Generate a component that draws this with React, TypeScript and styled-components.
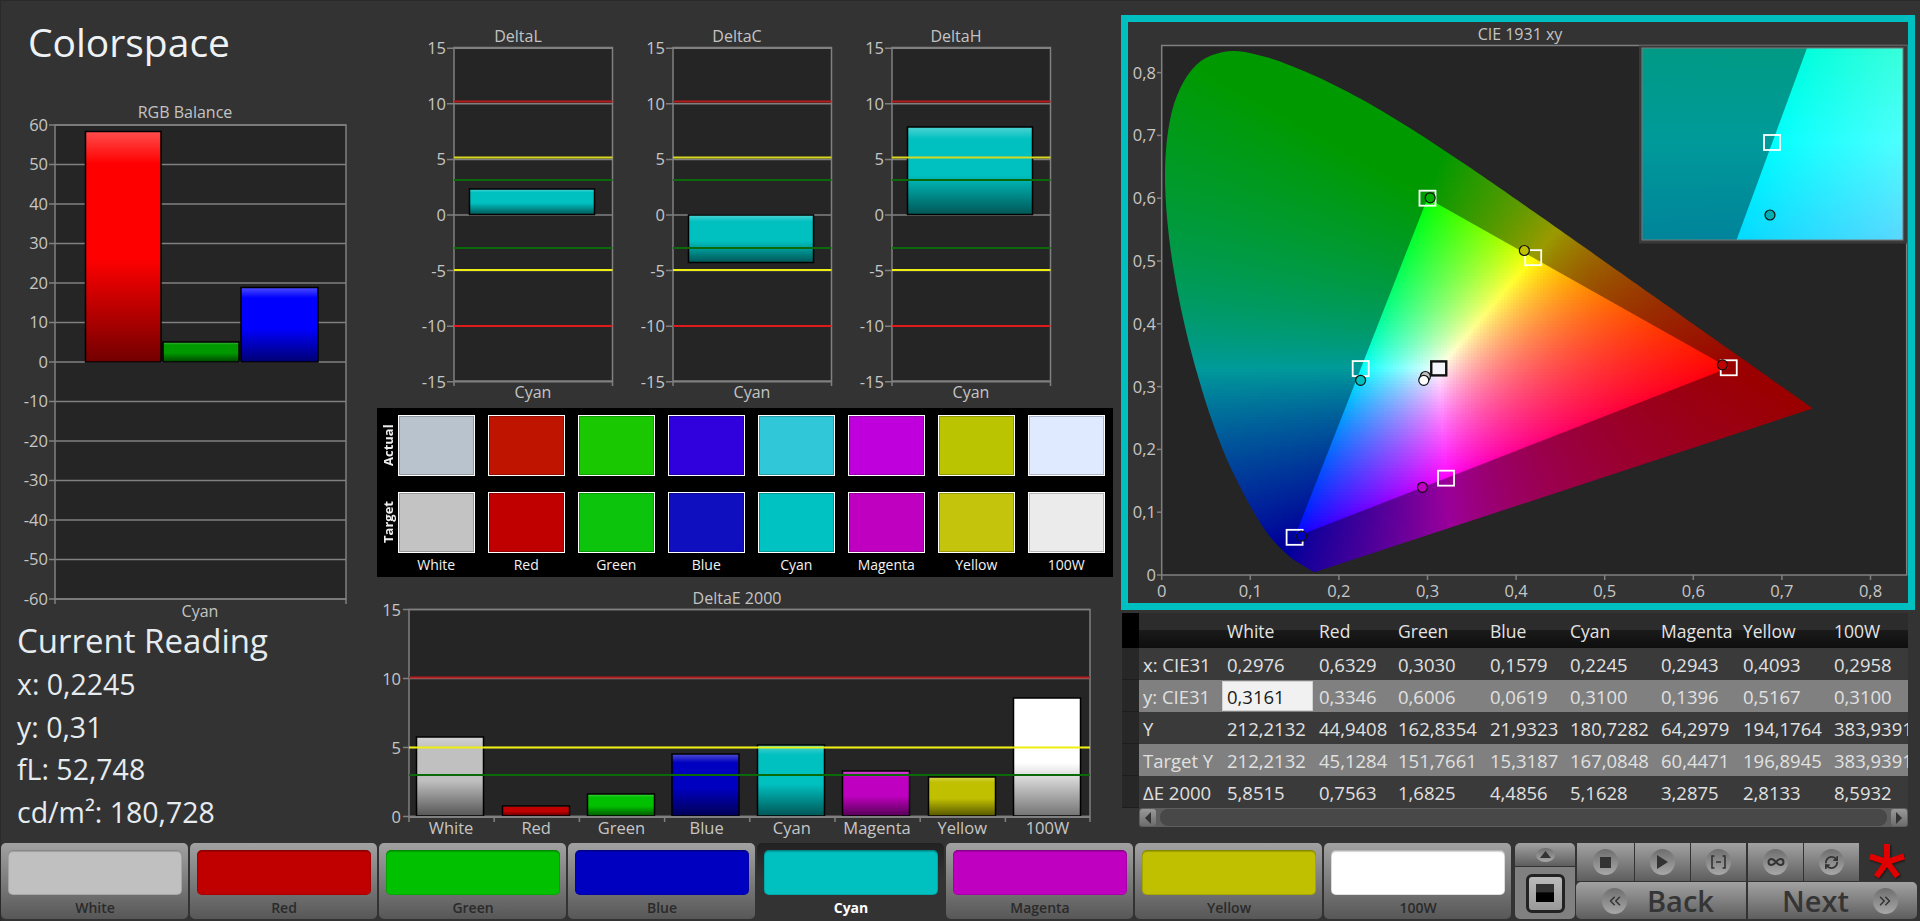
import React, { useMemo } from 'react';
import styled, { createGlobalStyle } from 'styled-components';
import { Infinity as InfinityIcon, RefreshCw, ChevronsLeft, ChevronsRight } from 'lucide-react';

const FONT = '"Open Sans", "Noto Sans", "DejaVu Sans", sans-serif';

const GlobalStyle = createGlobalStyle`
    html, body { margin: 0; padding: 0; background: #333; }
    * { box-sizing: border-box; }
`;

/* ---- colour helpers ---- */

const mix = (hex: string, target: number, t: number) => {
    const n = parseInt(hex.slice(1), 16);
    const c = [n >> 16, (n >> 8) & 255, n & 255].map(v => Math.round(v + (target - v) * t));
    return `rgb(${c.join(',')})`;
};

// xy to a normalised rec709 colour, dimmed for the part outside the gamut
const chroma = (x: number, y: number, bright: boolean) => {
    const X = x / y;
    const Z = (1 - x - y) / y;
    const lin = [
        3.2406 * X - 1.5372 - 0.4986 * Z,
        -0.9689 * X + 1.8758 + 0.0415 * Z,
        0.0557 * X - 0.204 + 1.057 * Z,
    ];
    const clipped = lin.map(v => Math.max(v, 0));
    const max = Math.max(...clipped) || 1;
    const k = bright ? 255 : 154;
    const c = clipped.map(v => Math.round(k * Math.pow(v / max, 1 / 1.2)));
    return `rgb(${c.join(',')})`;
};

/* ---- chart text ---- */

const Label = styled.text`
    font-family: ${FONT};
    font-size: 16.5px;
    fill: #c6c6c6;
`;

const Title = styled(Label)`
    font-size: 16px;
    fill: #c4c4c4;
`;

const Block = styled.svg`
    display: block;
    flex: none;
`;

type BarProps = { id: string; x: number; y: number; w: number; h: number; color: string };

const Bar: React.FC<BarProps> = ({ id, x, y, w, h, color }) => (
    <g>
        <defs>
            <linearGradient id={id} x1="0" y1="0" x2="0" y2="1">
                <stop offset="0" stopColor={mix(color, 255, 0.3)} />
                <stop offset="0.14" stopColor={color} />
                <stop offset="0.55" stopColor={color} />
                <stop offset="1" stopColor={mix(color, 0, 0.55)} />
            </linearGradient>
        </defs>
        <rect x={x} y={y} width={w} height={h} fill={`url(#${id})`} stroke="#000" strokeWidth="1.5" />
    </g>
);

const AXIS = '#808080';

/* ---- RGB balance ---- */

const rgbY = (v: number) => 362 - v * 3.95;

const RgbChart = () => (
    <Block width="376" height="522" viewBox="0 100 376 522">
        <Title x="185" y="118" textAnchor="middle">RGB Balance</Title>
        <rect x="55" y="125" width="291" height="474" fill="#252525" />
        {Array.from({ length: 13 }, (_, i) => 60 - i * 10).map(v => (
            <g key={v}>
                <line x1="49" x2="346" y1={rgbY(v)} y2={rgbY(v)} stroke={AXIS} strokeWidth="1.5" />
                <Label x="48" y={rgbY(v) + 5.5} textAnchor="end">{v}</Label>
            </g>
        ))}
        <rect x="55" y="125" width="291" height="474" fill="none" stroke={AXIS} strokeWidth="1.5" />
        <line x1="55" x2="55" y1="599" y2="604" stroke={AXIS} strokeWidth="1.5" />
        <line x1="346" x2="346" y1="599" y2="604" stroke={AXIS} strokeWidth="1.5" />
        <Bar id="rgb-r" x={85.5} y={131.5} w={75.5} h={230.5} color="#ff0000" />
        <Bar id="rgb-g" x={163} y={342} w={76} h={20} color="#009a00" />
        <Bar id="rgb-b" x={241} y={287.5} w={77} h={74.5} color="#0000ff" />
        <Title x="200" y="617" textAnchor="middle">Cyan</Title>
    </Block>
);

/* ---- delta L / C / H ---- */

const dY = (v: number) => 215 - v * 11.12;

const LIMITS = [
    { y: 101.5, color: '#b81c1c' },
    { y: 157.5, color: '#d8d820' },
    { y: 180, color: '#0a6a0a' },
    { y: 248, color: '#0a6a0a' },
    { y: 270, color: '#eeee10' },
    { y: 326, color: '#e01a1a' },
];

const DeltaChart: React.FC<{ name: string; top: number; bottom: number }> = ({ name, top, bottom }) => (
    <Block width="219" height="408" viewBox="0 0 219 408">
        <Title x="114" y="42" textAnchor="middle">{name}</Title>
        <rect x="50" y="47.5" width="158.5" height="333.5" fill="#252525" />
        {[15, 10, 5, 0, -5, -10, -15].map(v => (
            <g key={v}>
                <line x1="43" x2="208.5" y1={dY(v)} y2={dY(v)} stroke={AXIS} strokeWidth="1.5" />
                <Label x="42" y={dY(v) + 6} textAnchor="end">{v}</Label>
            </g>
        ))}
        <rect x="50" y="47.5" width="158.5" height="333.5" fill="none" stroke={AXIS} strokeWidth="1.5" />
        <line x1="50" x2="50" y1="381" y2="386" stroke={AXIS} strokeWidth="1.5" />
        <line x1="208.5" x2="208.5" y1="381" y2="386" stroke={AXIS} strokeWidth="1.5" />
        <Bar id={`delta-${name}`} x={65.5} y={top} w={125} h={bottom - top} color="#00c0c0" />
        {LIMITS.map(l => (
            <line key={l.y} x1="50" x2="208.5" y1={l.y} y2={l.y} stroke={l.color} strokeWidth="2" />
        ))}
        <Title x="129" y="398" textAnchor="middle">Cyan</Title>
    </Block>
);

const DeltaRow = styled.div`
    display: flex;
    padding-left: 28px;
    height: 408px;
`;

/* ---- swatches ---- */

const NAMES = ['White', 'Red', 'Green', 'Blue', 'Cyan', 'Magenta', 'Yellow', '100W'];
const ACTUAL = ['#b9c3cd', '#bf1400', '#19c800', '#3000dd', '#30c8d8', '#c000dc', '#bac400', '#dfe9ff'];
const TARGET = ['#c3c3c3', '#c00000', '#0cc40c', '#0f0fc0', '#00c2c2', '#c000c0', '#c4c40c', '#ebebeb'];

const SwatchPanel = styled.div`
    display: grid;
    grid-template-columns: 21px repeat(8, 90px);
    grid-template-rows: 61px 61px 1fr;
    row-gap: 16px;
    width: 736px;
    height: 169px;
    margin-left: 1px;
    padding-top: 7px;
    background: #000;
`;

const RowName = styled.div`
    writing-mode: vertical-rl;
    transform: rotate(180deg);
    display: flex;
    align-items: center;
    justify-content: center;
    font: 700 13px ${FONT};
    color: #eee;
`;

const Swatch = styled.div<{ $color: string }>`
    margin-right: 13.5px;
    background: ${p => p.$color};
    border: 1.5px solid #fff;
    box-shadow: inset 0 0 0 1px rgba(0, 0, 0, 0.22);
`;

const SwatchName = styled.div`
    margin: -14px 13.5px 0 0;
    text-align: center;
    font: 500 14px ${FONT};
    color: #f2f2f2;
    white-space: nowrap;
`;

const ColorChecker = () => (
    <SwatchPanel>
        <RowName>Actual</RowName>
        {ACTUAL.map(c => <Swatch key={c} $color={c} />)}
        <RowName>Target</RowName>
        {TARGET.map(c => <Swatch key={c} $color={c} />)}
        <span />
        {NAMES.map(n => <SwatchName key={n}>{n}</SwatchName>)}
    </SwatchPanel>
);

/* ---- delta E ---- */

const E_BARS = [
    { x: 416.5, top: 737, color: '#c0c0c0' },
    { x: 502.5, top: 806, color: '#c00000' },
    { x: 587.5, top: 794, color: '#00c000' },
    { x: 672, top: 754, color: '#0000c0' },
    { x: 757.5, top: 745, color: '#00c0c0' },
    { x: 842.5, top: 771, color: '#c000c0' },
    { x: 928.5, top: 777, color: '#c0c000' },
    { x: 1013.5, top: 698, color: '#ffffff' },
];

const eY = (v: number) => 816.5 - v * 13.8;

const DeltaEChart = () => (
    <Block width="744" height="266" viewBox="376 577 744 266">
        <Title x="737" y="604" textAnchor="middle">DeltaE 2000</Title>
        <rect x="409" y="609.5" width="681" height="207" fill="#252525" />
        {[15, 10, 5, 0].map(v => (
            <g key={v}>
                <line x1="403" x2="1090" y1={eY(v)} y2={eY(v)} stroke={AXIS} strokeWidth="1.5" />
                <Label x="401" y={eY(v) + 6} textAnchor="end">{v}</Label>
            </g>
        ))}
        <rect x="409" y="609.5" width="681" height="207" fill="none" stroke={AXIS} strokeWidth="1.5" />
        {E_BARS.map(b => (
            <Bar key={b.x} id={`e-${b.x}`} x={b.x} y={b.top} w={67} h={816 - b.top} color={b.color} />
        ))}
        <line x1="409" x2="1090" y1="817" y2="817" stroke={AXIS} strokeWidth="2" />
        <line x1="409" x2="1090" y1="677.5" y2="677.5" stroke="#b81c1c" strokeWidth="2" />
        <line x1="409" x2="1090" y1="747.5" y2="747.5" stroke="#eeee10" strokeWidth="2" />
        <line x1="409" x2="1090" y1="775" y2="775" stroke="#0a6a0a" strokeWidth="2" />
        {NAMES.map((n, i) => (
            <g key={n}>
                <line x1={409 + i * 85.2} x2={409 + i * 85.2} y1="817" y2="822" stroke={AXIS} strokeWidth="1.5" />
                <Label x={451 + i * 85.2} y="834" textAnchor="middle" fontSize="16.5">{n}</Label>
            </g>
        ))}
        <line x1="1090" x2="1090" y1="817" y2="822" stroke={AXIS} strokeWidth="1.5" />
    </Block>
);

/* ---- CIE diagram ---- */

const LOCUS: [number, number][] = [
    [0.1741, 0.005], [0.1714, 0.0051], [0.1644, 0.0109], [0.1566, 0.0177], [0.144, 0.0297],
    [0.1241, 0.0578], [0.1096, 0.0868], [0.0913, 0.1327], [0.0687, 0.2007], [0.0454, 0.295],
    [0.0235, 0.4127], [0.0082, 0.5384], [0.0039, 0.6548], [0.0139, 0.7502], [0.0389, 0.812],
    [0.0743, 0.8338], [0.1142, 0.8262], [0.1547, 0.8059], [0.1929, 0.7816], [0.2296, 0.7543],
    [0.2658, 0.7243], [0.3016, 0.6923], [0.3373, 0.6589], [0.3731, 0.6245], [0.4087, 0.5896],
    [0.4441, 0.5547], [0.4788, 0.5202], [0.5125, 0.4866], [0.5448, 0.4544], [0.5752, 0.4242],
    [0.6029, 0.3965], [0.627, 0.3725], [0.6658, 0.334], [0.6915, 0.3083], [0.7079, 0.292],
    [0.726, 0.274], [0.7347, 0.2653],
];

const cx = (v: number) => 1161.7 + v * 886;
const cy = (v: number) => 575 - v * 628;

// catmull-rom through the spectral samples so the curve stays round
const densify = (pts: [number, number][]) => {
    const out: [number, number][] = [];
    for (let i = 0; i < pts.length - 1; i++) {
        const p0 = pts[Math.max(i - 1, 0)];
        const p1 = pts[i];
        const p2 = pts[i + 1];
        const p3 = pts[Math.min(i + 2, pts.length - 1)];
        for (let s = 0; s < 6; s++) {
            const t = s / 6;
            const at = (k: 0 | 1) =>
                0.5 * (2 * p1[k] + (p2[k] - p0[k]) * t +
                    (2 * p0[k] - 5 * p1[k] + 4 * p2[k] - p3[k]) * t * t +
                    (3 * p1[k] - p0[k] - 3 * p2[k] + p3[k]) * t * t * t);
            out.push([at(0), at(1)]);
        }
    }
    out.push(pts[pts.length - 1]);
    return out;
};

const LOCUS_PX = densify(LOCUS.map(([x, y]) => [cx(x), cy(y)] as [number, number]));
const LOCUS_POINTS = LOCUS_PX.map(p => p.join(',')).join(' ');
const GAMUT_POINTS = [[0.64, 0.33], [0.3, 0.6], [0.15, 0.06]].map(([x, y]) => `${cx(x)},${cy(y)}`).join(' ');

const inside = (px: number, py: number) => {
    let hit = false;
    for (let i = 0, j = LOCUS_PX.length - 1; i < LOCUS_PX.length; j = i++) {
        const [xi, yi] = LOCUS_PX[i];
        const [xj, yj] = LOCUS_PX[j];
        if (yi > py !== yj > py && px < ((xj - xi) * (py - yi)) / (yj - yi) + xi) hit = !hit;
    }
    return hit;
};

type Cell = { x: number; y: number; fill: string };

const CELL = 3;
const CORNERS = [[0, 0], [CELL, 0], [0, CELL], [CELL, CELL]];

const outerCells = () => {
    const cells: Cell[] = [];
    for (let py = 45; py < 576; py += CELL) {
        for (let px = 1162; px < 1816; px += CELL) {
            if (!CORNERS.some(([a, b]) => inside(px + a, py + b))) continue;
            const x = (px + 1.5 - 1161.7) / 886;
            const y = Math.max((575 - py - 1.5) / 628, 0.004);
            cells.push({ x: px, y: py, fill: chroma(x, y, false) });
        }
    }
    return cells;
};

const gamutCells = () => {
    const cells: Cell[] = [];
    for (let py = 195; py < 540; py += CELL) {
        for (let px = 1291; px < 1731; px += CELL) {
            const x = (px + 1.5 - 1161.7) / 886;
            const y = (575 - py - 1.5) / 628;
            cells.push({ x: px, y: py, fill: chroma(x, y, true) });
        }
    }
    return cells;
};

const zoomCells = (bright: boolean) => {
    const cells: Cell[] = [];
    for (let py = 48; py < 240; py += CELL) {
        for (let px = 1642; px < 1903; px += CELL) {
            const x = 0.2246 + (px + 1.5 - 1772) / 5150;
            const y = 0.3287 - (py + 1.5 - 142) / 3900;
            cells.push({ x: px, y: py, fill: chroma(x, y, bright) });
        }
    }
    return cells;
};

const TARGETS: [number, number][] = [
    [0.64, 0.33], [0.3, 0.6], [0.15, 0.06], [0.4193, 0.5053], [0.2246, 0.3287], [0.3209, 0.1542],
];

const READINGS = [
    { x: 0.2976, y: 0.3161, fill: '#c0c0c0' },
    { x: 0.6329, y: 0.3346, fill: '#c00000' },
    { x: 0.303, y: 0.6006, fill: '#00b000' },
    { x: 0.1579, y: 0.0619, fill: '#0000c0' },
    { x: 0.2245, y: 0.31, fill: '#00c0c0' },
    { x: 0.2943, y: 0.1396, fill: '#c000c0' },
    { x: 0.4093, y: 0.5167, fill: '#c0c000' },
    { x: 0.2958, y: 0.31, fill: '#ffffff' },
];

const Cells: React.FC<{ cells: Cell[] }> = ({ cells }) => (
    <g shapeRendering="crispEdges">
        {cells.map(c => (
            <rect key={`${c.x}-${c.y}`} x={c.x} y={c.y} width={CELL} height={CELL} fill={c.fill} />
        ))}
    </g>
);

const Frame = styled.div`
    width: 794px;
    height: 595px;
    margin: 15px 0 0 1px;
    border: 7px solid #00bfc0;
    background: #333;
`;

const CieDiagram = () => {
    const outer = useMemo(outerCells, []);
    const gamut = useMemo(gamutCells, []);
    const zoomDim = useMemo(() => zoomCells(false), []);
    const zoomBright = useMemo(() => zoomCells(true), []);
    return (
        <Frame>
            <Block width="780" height="581" viewBox="1128 22 780 581">
                <defs>
                    <clipPath id="locus"><polygon points={LOCUS_POINTS} /></clipPath>
                    <clipPath id="gamut"><polygon points={GAMUT_POINTS} /></clipPath>
                    <clipPath id="zoomGamut"><polygon points="1807,48 1903,48 1903,240 1736.5,240" /></clipPath>
                </defs>
                <Title x="1520" y="40" textAnchor="middle">CIE 1931 xy</Title>
                <rect x="1161.7" y="45.5" width="745" height="529.5" fill="#252525" stroke={AXIS} strokeWidth="1.5" />
                <g clipPath="url(#locus)"><Cells cells={outer} /></g>
                <g clipPath="url(#gamut)"><Cells cells={gamut} /></g>
                {[0, 1, 2, 3, 4, 5, 6, 7, 8].map(i => (
                    <g key={i}>
                        <line x1="1157" x2="1161.7" y1={cy(i / 10)} y2={cy(i / 10)} stroke={AXIS} strokeWidth="1.5" />
                        <Label x="1156" y={cy(i / 10) + 6} textAnchor="end" fontSize="14.5">{i ? `0,${i}` : '0'}</Label>
                        <line x1={cx(i / 10)} x2={cx(i / 10)} y1="575" y2="580" stroke={AXIS} strokeWidth="1.5" />
                        <Label x={cx(i / 10)} y="597" textAnchor="middle" fontSize="14.5">{i ? `0,${i}` : '0'}</Label>
                    </g>
                ))}
                {TARGETS.map(([x, y]) => (
                    <rect key={x} x={cx(x) - 8} y={cy(y) - 7.5} width="16" height="15" fill="none" stroke="#fff" strokeWidth="1.8" />
                ))}
                <rect x={cx(0.3127) - 7.5} y={cy(0.329) - 7} width="15" height="14" fill="#f4f4fb" stroke="#111" strokeWidth="2.4" />
                {READINGS.map(r => (
                    <ellipse key={r.x} cx={cx(r.x)} cy={cy(r.y)} rx="5" ry="5" fill={r.fill} stroke="#111" strokeWidth="1.2" />
                ))}
                <rect x="1639" y="45.5" width="268" height="198" fill="#3a3a3a" />
                <Cells cells={zoomDim} />
                <g clipPath="url(#zoomGamut)"><Cells cells={zoomBright} /></g>
                <rect x="1642" y="48" width="261" height="192" fill="none" stroke="#7a7a7a" strokeWidth="1" />
                <rect x="1764" y="135" width="16" height="15" fill="none" stroke="#fff" strokeWidth="1.8" />
                <circle cx="1770" cy="215" r="5" fill="#00b0b0" stroke="#111" strokeWidth="1.2" />
            </Block>
        </Frame>
    );
};

/* ---- table ---- */

const TABLE_ROWS = [
    ['x: CIE31', '0,2976', '0,6329', '0,3030', '0,1579', '0,2245', '0,2943', '0,4093', '0,2958'],
    ['y: CIE31', '0,3161', '0,3346', '0,6006', '0,0619', '0,3100', '0,1396', '0,5167', '0,3100'],
    ['Y', '212,2132', '44,9408', '162,8354', '21,9323', '180,7282', '64,2979', '194,1764', '383,9391'],
    ['Target Y', '212,2132', '45,1284', '151,7661', '15,3187', '167,0848', '60,4471', '196,8945', '383,9391'],
    ['ΔE 2000', '5,8515', '0,7563', '1,6825', '4,4856', '5,1628', '3,2875', '2,8133', '8,5932'],
];

const COLUMNS = '17px 84px 92px 79px 92px 80px 91px 82px 91px 78px';

const Table = styled.div`
    width: 786px;
    margin: 3px 0 0 2px;
    overflow: hidden;
    font-family: ${FONT};
`;

const HeadRow = styled.div`
    display: grid;
    grid-template-columns: ${COLUMNS};
    height: 35px;
    align-items: center;
    font-size: 17.5px;
    color: #e4e4e4;
    background: linear-gradient(#2c2c2c 0 48%, #1a1a1a 50%, #0e0e0e 100%);
    & > :first-child {
        align-self: stretch;
        background: #000;
    }
`;

const BodyRow = styled.div<{ $alt: boolean }>`
    display: grid;
    grid-template-columns: ${COLUMNS};
    height: 32px;
    align-items: center;
    font-size: 18.5px;
    white-space: nowrap;
    color: #e0e0e0;
    background: ${p => (p.$alt ? '#808080' : '#3a3a3a')};
`;

const Gutter = styled.div`
    align-self: stretch;
    background: #272727;
    border-bottom: 1px solid #1d1d1d;
`;

const TableCell = styled.div`
    padding-left: 4px;
`;

const SelectedCell = styled(TableCell)`
    align-self: stretch;
    margin: 1px 2px 1px -1px;
    padding-top: 2px;
    background: #f1f1f1;
    border: 1px solid #d2d2d2;
    color: #1a1a1a;
`;

const Scrollbar = styled.div`
    display: flex;
    align-items: center;
    gap: 4px;
    width: 769px;
    height: 19px;
    margin-left: 19px;
    padding: 1px;
    border-radius: 3px;
    background: #5e5e5e;
`;

const ScrollButton = styled.div`
    flex: none;
    display: flex;
    align-items: center;
    justify-content: center;
    width: 16px;
    height: 17px;
    border-radius: 3px;
    background: linear-gradient(#999, #6c6c6c);
`;

const ScrollArrow = styled.span<{ $right?: boolean }>`
    width: 0;
    height: 0;
    border-top: 6px solid transparent;
    border-bottom: 6px solid transparent;
    ${p => (p.$right ? 'border-left: 6px solid #333;' : 'border-right: 6px solid #333;')}
`;

const ScrollThumb = styled.div`
    flex: 1;
    height: 17px;
    border-radius: 8px;
    background: #484848;
`;

const ReadingsTable = () => (
    <>
        <Table>
            <HeadRow>
                <div />
                <div />
                {NAMES.map(n => <TableCell key={n}>{n}</TableCell>)}
            </HeadRow>
            {TABLE_ROWS.map((row, i) => (
                <BodyRow key={row[0]} $alt={i % 2 === 1}>
                    <Gutter />
                    {row.map((v, j) =>
                        i === 1 && j === 1
                            ? <SelectedCell key={j}>{v}</SelectedCell>
                            : <TableCell key={j}>{v}</TableCell>
                    )}
                </BodyRow>
            ))}
        </Table>
        <Scrollbar>
            <ScrollButton><ScrollArrow /></ScrollButton>
            <ScrollThumb />
            <ScrollButton><ScrollArrow $right /></ScrollButton>
        </Scrollbar>
    </>
);

/* ---- bottom bar ---- */

const BUTTONS = [
    { name: 'White', color: '#c0c0c0' },
    { name: 'Red', color: '#c00000' },
    { name: 'Green', color: '#00c000' },
    { name: 'Blue', color: '#0000c0' },
    { name: 'Cyan', color: '#00c0c0', active: true },
    { name: 'Magenta', color: '#c000c0' },
    { name: 'Yellow', color: '#c0c000' },
    { name: '100W', color: '#ffffff' },
];

const BottomBar = styled.div`
    display: flex;
    height: 78px;
    padding-left: 1px;
    gap: 2px;
`;

const ColorButton = styled.div<{ $active?: boolean }>`
    flex: none;
    display: flex;
    flex-direction: column;
    width: 187px;
    height: 76px;
    padding: 7px 6px 0 7px;
    border-radius: 5px;
    background: ${p => (p.$active ? 'linear-gradient(#222, #333 45%)' : 'linear-gradient(#a2a2a2, #575757)')};
`;

const ButtonSwatch = styled.div<{ $color: string }>`
    height: 45px;
    border-radius: 5px;
    background: ${p => p.$color};
    box-shadow: inset 0 2px 1px rgba(0, 0, 0, 0.18), inset 0 0 0 1px rgba(0, 0, 0, 0.12);
`;

const ButtonName = styled.div<{ $active?: boolean }>`
    flex: 1;
    display: flex;
    align-items: center;
    justify-content: center;
    font: ${p => (p.$active ? 700 : 600)} 14px ${FONT};
    color: ${p => (p.$active ? '#fff' : '#2a2a2a')};
`;

const Controls = styled.div`
    display: flex;
    margin-left: 2px;
    height: 76px;
`;

const SideColumn = styled.div`
    display: flex;
    flex-direction: column;
    gap: 1px;
    width: 60px;
    margin-right: 1px;
`;

const GreyButton = styled.div`
    display: flex;
    align-items: center;
    justify-content: center;
    background: linear-gradient(#a2a2a2, #5e5e5e);
`;

const UpButton = styled(GreyButton)`
    height: 23px;
    border-radius: 5px 5px 0 0;
`;

const StopBox = styled(GreyButton)`
    flex: 1;
    border-radius: 0 0 5px 5px;
    background: #808080;
`;

const BigStop = styled.div`
    display: flex;
    align-items: center;
    justify-content: center;
    width: 39px;
    height: 39px;
    border: 3px solid #222;
    border-radius: 6px;
    background: linear-gradient(#bbb, #999);
`;

const BigStopMark = styled.div`
    width: 18px;
    height: 18px;
    background: linear-gradient(#333 0 46%, #000 48%);
`;

const Oval = styled.div<{ $small?: boolean }>`
    flex: none;
    display: flex;
    align-items: center;
    justify-content: center;
    width: ${p => (p.$small ? 19 : 25)}px;
    height: ${p => (p.$small ? 14 : 26)}px;
    border-radius: 50%;
    color: #333;
    background: linear-gradient(#6e6e6e, #a8a8a8);
`;

const ControlRows = styled.div`
    display: flex;
    flex-direction: column;
    gap: 1px;
    width: 341px;
`;

const TransportRow = styled.div`
    display: flex;
    height: 38px;
`;

const TransportButton = styled(GreyButton)<{ $width: number; $gap?: boolean }>`
    width: ${p => p.$width}px;
    margin-left: ${p => (p.$gap ? 2 : 1)}px;
`;

const Star = styled.svg`
    margin-left: 10px;
`;

const NavRow = styled.div`
    display: flex;
    gap: 2px;
    height: 37px;
`;

const NavButton = styled(GreyButton)<{ $width: number; $left?: boolean }>`
    width: ${p => p.$width}px;
    gap: ${p => (p.$left ? 20 : 24)}px;
    justify-content: flex-start;
    padding-left: ${p => (p.$left ? 26 : 34)}px;
    border-radius: ${p => (p.$left ? '5px 0 0 5px' : '0 5px 5px 0')};
    font: 600 29px ${FONT};
    color: #353535;
`;

const ControlPanel = () => (
    <Controls>
        <SideColumn>
            <UpButton>
                <Oval $small>
                    <svg width="11" height="7" viewBox="0 0 11 7"><path d="M5.5 0 11 7H0z" fill="#333" /></svg>
                </Oval>
            </UpButton>
            <StopBox>
                <BigStop><BigStopMark /></BigStop>
            </StopBox>
        </SideColumn>
        <ControlRows>
            <TransportRow>
                <TransportButton $width={57}>
                    <Oval><svg width="11" height="11" viewBox="0 0 11 11"><rect width="11" height="11" fill="#333" /></svg></Oval>
                </TransportButton>
                <TransportButton $width={55}>
                    <Oval><svg width="11" height="14" viewBox="0 0 11 14"><path d="M0 0 11 7 0 14z" fill="#333" /></svg></Oval>
                </TransportButton>
                <TransportButton $width={55}>
                    <Oval>
                        <svg width="15" height="14" viewBox="0 0 15 14" fill="none" stroke="#333" strokeWidth="1.6">
                            <path d="M3.5 1H1v12h2.5M11.5 1H14v12h-2.5M5 7h5" />
                        </svg>
                    </Oval>
                </TransportButton>
                <TransportButton $width={55} $gap>
                    <Oval><InfinityIcon size={18} strokeWidth={2.6} /></Oval>
                </TransportButton>
                <TransportButton $width={55}>
                    <Oval><RefreshCw size={15} strokeWidth={2.8} /></Oval>
                </TransportButton>
                <Star width="36" height="38" viewBox="-18 -19 36 38">
                    <g stroke="#e00000" strokeWidth="6" strokeLinecap="butt" filter="drop-shadow(1px 1px 1px rgba(0,0,0,.6))">
                        {[0, 72, 144, 216, 288].map(a => (
                            <line key={a} x1="0" y1="1" x2="0" y2="-18" transform={`rotate(${a})`} />
                        ))}
                    </g>
                </Star>
            </TransportRow>
            <NavRow>
                <NavButton $width={170} $left>
                    <Oval><ChevronsLeft size={18} strokeWidth={2} /></Oval>
                    Back
                </NavButton>
                <NavButton $width={169}>
                    Next
                    <Oval><ChevronsRight size={18} strokeWidth={2} /></Oval>
                </NavButton>
            </NavRow>
        </ControlRows>
    </Controls>
);

/* ---- page ---- */

const Root = styled.div`
    display: flex;
    flex-direction: column;
    width: 1920px;
    height: 921px;
    overflow: hidden;
    background: #333;
    box-shadow: inset 0 1px 0 #2a2a2a, inset 1px 0 0 #2a2a2a;
    font-family: ${FONT};
`;

const Main = styled.div`
    display: grid;
    grid-template-columns: 376px 744px 800px;
    height: 843px;
`;

const LeftColumn = styled.div`
    display: flex;
    flex-direction: column;
`;

const Heading = styled.h1`
    height: 100px;
    margin: 0;
    padding: 15px 0 0 28px;
    font: 400 39px ${FONT};
    color: #eef2f5;
`;

const Reading = styled.div`
    padding-left: 17px;
    color: #e6ebef;
`;

const ReadingTitle = styled.div`
    height: 41px;
    font-size: 33px;
    line-height: 38px;
`;

const ReadingLine = styled.div`
    height: 42.5px;
    font-size: 28.5px;
    line-height: 42.5px;
`;

const App = () => (
    <Root>
        <GlobalStyle />
        <Main>
            <LeftColumn>
                <Heading>Colorspace</Heading>
                <RgbChart />
                <Reading>
                    <ReadingTitle>Current Reading</ReadingTitle>
                    <ReadingLine>x: 0,2245</ReadingLine>
                    <ReadingLine>y: 0,31</ReadingLine>
                    <ReadingLine>fL: 52,748</ReadingLine>
                    <ReadingLine>cd/m²: 180,728</ReadingLine>
                </Reading>
            </LeftColumn>
            <div>
                <DeltaRow>
                    <DeltaChart name="DeltaL" top={189} bottom={214.5} />
                    <DeltaChart name="DeltaC" top={215} bottom={262.5} />
                    <DeltaChart name="DeltaH" top={127} bottom={214.5} />
                </DeltaRow>
                <ColorChecker />
                <DeltaEChart />
            </div>
            <div>
                <CieDiagram />
                <ReadingsTable />
            </div>
        </Main>
        <BottomBar>
            {BUTTONS.map(b => (
                <ColorButton key={b.name} $active={b.active}>
                    <ButtonSwatch $color={b.color} />
                    <ButtonName $active={b.active}>{b.name}</ButtonName>
                </ColorButton>
            ))}
            <ControlPanel />
        </BottomBar>
    </Root>
);

export default App;
